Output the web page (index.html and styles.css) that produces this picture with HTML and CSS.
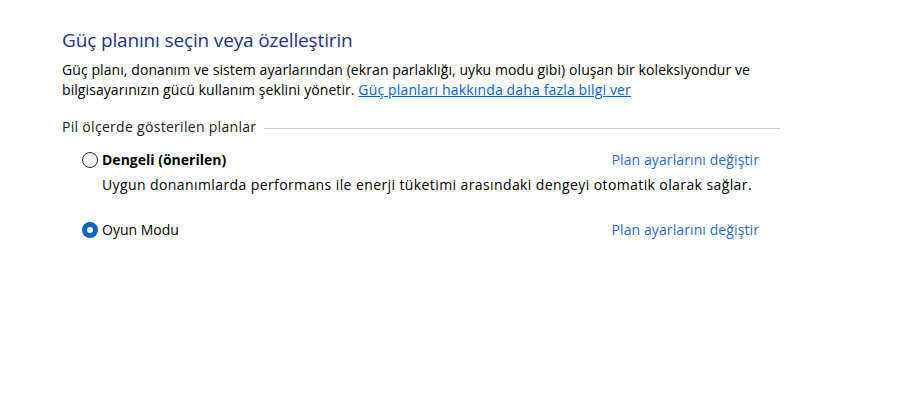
FILE: index.html
```html
<!DOCTYPE html>
<html lang="tr">
<head>
<meta charset="utf-8">
<link rel="stylesheet" href="styles.css">
</head>
<body>
<div class="page">
  <h1 class="title">Güç planını seçin veya özelleştirin</h1>
  <p class="intro">Güç planı, donanım ve sistem ayarlarından (ekran parlaklığı, uyku modu gibi) oluşan bir koleksiyondur ve<br>bilgisayarınızın gücü kullanım şeklini yönetir. <a class="link" href="#">Güç planları hakkında daha fazla bilgi ver</a></p>
  <div class="group-head">
    <span class="group-label">Pil ölçerde gösterilen planlar</span>
    <span class="group-line"></span>
  </div>
  <div class="plans">
    <div class="plan">
      <div class="plan-row">
        <span class="radio"></span>
        <span class="plan-name bold">Dengeli (önerilen)</span>
        <a class="change" href="#">Plan ayarlarını değiştir</a>
      </div>
      <div class="plan-desc">Uygun donanımlarda performans ile enerji tüketimi arasındaki dengeyi otomatik olarak sağlar.</div>
    </div>
    <div class="plan">
      <div class="plan-row">
        <span class="radio checked"></span>
        <span class="plan-name">Oyun Modu</span>
        <a class="change" href="#">Plan ayarlarını değiştir</a>
      </div>
    </div>
  </div>
</div>
</body>
</html>
```

FILE: styles.css
```css
html, body {
  margin: 0;
  padding: 0;
  background: #ffffff;
}
body {
  font-family: "Open Sans", "Liberation Sans", Arial, sans-serif;
  font-size: 14px;
  color: #000000;
}
.page {
  padding: 26px 0 0 62px;
  width: 718px;
}
.title {
  margin: 0;
  font-size: 19px;
  font-weight: normal;
  color: #1e3287;
  line-height: 28px;
  letter-spacing: -0.15px;
}
.intro {
  margin: 6px 0 0 0;
  line-height: 20px;
  letter-spacing: 0.08px;
}
.link {
  color: #0066cc;
  text-decoration: underline;
  letter-spacing: 0.15px;
}
.group-head {
  display: flex;
  align-items: center;
  margin-top: 17px;
  line-height: 20px;
}
.group-label {
  color: #1a1a1a;
  padding-right: 8px;
  letter-spacing: 0.3px;
}
.group-line {
  flex: 1;
  height: 1px;
  background: #cccccc;
  margin-top: 2px;
}
.plans {
  padding-left: 20px;
  padding-top: 13px;
  width: 677px;
}
.plan {
  margin-bottom: 25px;
}
.plan-row {
  display: flex;
  align-items: center;
  line-height: 20px;
}
.radio {
  width: 14px;
  height: 14px;
  border: 1px solid #333333;
  border-radius: 50%;
  background: #f2f2f2;
  margin-right: 4px;
  flex: none;
}
.radio.checked {
  width: 6px;
  height: 6px;
  border: 5px solid #0067c0;
  background: #ffffff;
}
.plan-name {
  flex: 1;
}
.bold {
  font-weight: bold;
}
.change {
  color: #2a6ad0;
  text-decoration: none;
  letter-spacing: 0.1px;
}
.plan-desc {
  padding-left: 20px;
  margin-top: 5px;
  line-height: 20px;
  letter-spacing: 0.4px;
}
```
